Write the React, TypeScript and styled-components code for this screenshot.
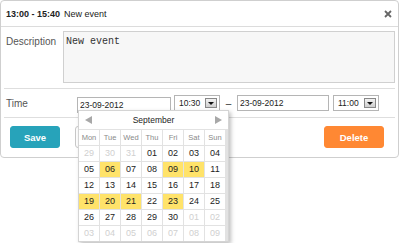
import React from "react";
import styled, { createGlobalStyle } from "styled-components";

const GlobalStyle = createGlobalStyle`
  html, body {
    margin: 0;
    padding: 0;
    background: #fff;
  }
  body {
    font-family: "Liberation Sans", Arial, sans-serif;
    color: #333;
  }
  #root {
    min-height: 243px;
  }
`;

const Dialog = styled.div`
  width: 397px;
  height: 156px;
  border: 1px solid #cfcfcf;
  border-radius: 4px;
  background: #fff;
  box-sizing: content-box;
`;

const Header = styled.div`
  height: 25px;
  display: flex;
  align-items: center;
  padding: 0 6px 0 5px;
  border-bottom: 1px solid #dcdcdc;
  font-size: 9px;
  color: #222;
  .time {
    font-weight: 700;
    margin-right: 4px;
  }
`;

const Close = styled.button`
  margin-left: auto;
  border: none;
  background: none;
  padding: 0;
  width: 8px;
  height: 8px;
  display: flex;
  cursor: pointer;
`;

const Row = styled.div<{ $height: number; $align?: string }>`
  height: ${(p) => p.$height}px;
  display: flex;
  align-items: ${(p) => p.$align || "center"};
  padding-left: 2px;
  margin: 0 3px;
  border-bottom: 1px solid #dedede;
`;

const Label = styled.div<{ $width: number; $top?: number }>`
  width: ${(p) => p.$width}px;
  padding-top: ${(p) => p.$top || 0}px;
  flex: none;
  font-size: 10px;
  color: #555;
`;

const TextArea = styled.textarea`
  width: 333px;
  height: 52px;
  box-sizing: border-box;
  border: 1px solid #d0d0d0;
  background: #f7f7f7;
  font-family: "Liberation Mono", "Courier New", monospace;
  font-size: 10px;
  color: #333;
  padding: 4px 2px;
  margin-top: 4px;
  resize: none;
  outline: none;
`;

const DateField = styled.div`
  position: relative;
`;

const DateInput = styled.input<{ $width: number }>`
  width: ${(p) => p.$width}px;
  height: 16px;
  box-sizing: border-box;
  border: 1px solid #b5b5b5;
  padding: 0 2px;
  font-family: "Liberation Sans", Arial, sans-serif;
  font-size: 8.5px;
  color: #222;
  outline: none;
`;

const TimeSelect = styled.div<{ $ml: number }>`
  margin-left: ${(p) => p.$ml}px;
  width: 46px;
  height: 16px;
  box-sizing: border-box;
  border: 1px solid #b5b5b5;
  display: flex;
  align-items: center;
  padding: 0 2px 0 4px;
  font-size: 8.5px;
  color: #222;
  .drop {
    margin-left: auto;
    width: 12px;
    height: 10px;
    border: 1px solid #888;
    background: linear-gradient(#f2f2f2, #cfcfcf);
    display: flex;
    align-items: center;
    justify-content: center;
    box-sizing: border-box;
  }
  .drop::after {
    content: "";
    border-left: 3px solid transparent;
    border-right: 3px solid transparent;
    border-top: 3px solid #111;
    margin-top: 1px;
  }
`;

const Dash = styled.span`
  width: 17px;
  text-align: center;
  font-size: 10px;
  color: #333;
`;

const Actions = styled.div`
  height: 38px;
  display: flex;
  align-items: center;
  padding: 0 14px 0 9px;
  gap: 15px;
`;

const Button = styled.button<{ $bg: string; $width: number }>`
  width: ${(p) => p.$width}px;
  height: 22px;
  border-radius: 3px;
  border: 1px solid ${(p) => (p.$bg === "#fff" ? "#c8c8c8" : p.$bg)};
  background: ${(p) => p.$bg};
  color: ${(p) => (p.$bg === "#fff" ? "#444" : "#fff")};
  font-family: "Liberation Sans", Arial, sans-serif;
  font-weight: 700;
  font-size: 9.5px;
  padding: 0;
  cursor: pointer;
  &:last-child {
    margin-left: auto;
  }
`;

const Calendar = styled.div`
  position: absolute;
  top: 16px;
  left: 1px;
  width: 149px;
  background: #fff;
  border: 1px solid #d4d4d4;
  box-shadow: 2px 2px 4px rgba(0, 0, 0, 0.25);
  z-index: 2;
`;

const CalHead = styled.div`
  height: 17px;
  display: flex;
  align-items: center;
  justify-content: space-between;
  padding: 1px 6px 0;
  font-size: 8.5px;
  color: #222;
`;

const Arrow = styled.span<{ $dir: "left" | "right" }>`
  width: 0;
  height: 0;
  border-top: 4px solid transparent;
  border-bottom: 4px solid transparent;
  ${(p) =>
    p.$dir === "left"
      ? "border-right: 7px solid #a8a8a8;"
      : "border-left: 7px solid #a8a8a8;"}
`;

const Grid = styled.div`
  display: grid;
  grid-template-columns: repeat(7, 20px);
  grid-auto-rows: 15px;
  gap: 1px;
  background: #e2e2e2;
  border-top: 1px solid #e2e2e2;
`;

const Cell = styled.div<{ $kind: "head" | "day" | "other" | "busy" }>`
  display: flex;
  align-items: center;
  justify-content: center;
  overflow: hidden;
  font-size: ${(p) => (p.$kind === "head" ? "7.5px" : "9px")};
  background: ${(p) => (p.$kind === "busy" ? "#ffe36a" : "#fff")};
  color: ${(p) =>
    p.$kind === "head" ? "#8a8a8a" : p.$kind === "other" ? "#d0d0d0" : "#222"};
`;

const weekdays = ["Mon", "Tue", "Wed", "Thu", "Fri", "Sat", "Sun"];
const busy = [6, 9, 10, 19, 20, 21, 23];

const pad = (n: number) => (n < 10 ? "0" + n : String(n));

const days: { label: string; kind: "day" | "other" | "busy" }[] = [
  ...[29, 30, 31].map((d) => ({ label: pad(d), kind: "other" as const })),
  ...Array.from({ length: 30 }, (_, i) => ({
    label: pad(i + 1),
    kind: busy.includes(i + 1) ? ("busy" as const) : ("day" as const),
  })),
  ...Array.from({ length: 9 }, (_, i) => ({
    label: pad(i + 1),
    kind: "other" as const,
  })),
];

const CloseIcon = () => (
  <svg width="8" height="8" viewBox="0 0 8 8">
    <path d="M1 1L7 7M7 1L1 7" stroke="#666" strokeWidth="1.8" />
  </svg>
);

const App = () => {
  return (
    <>
      <GlobalStyle />
      <Dialog>
        <Header>
          <span className="time">13:00 - 15:40</span>
          <span>New event</span>
          <Close>
            <CloseIcon />
          </Close>
        </Header>
        <Row $height={61} $align="flex-start">
          <Label $width={57} $top={9}>
            Description
          </Label>
          <TextArea defaultValue="New event" />
        </Row>
        <Row $height={28}>
          <Label $width={71}>Time</Label>
          <DateField>
            <DateInput $width={94} defaultValue="23-09-2012" />
            <Calendar>
              <CalHead>
                <Arrow $dir="left" />
                <span>September</span>
                <Arrow $dir="right" />
              </CalHead>
              <Grid>
                {weekdays.map((w) => (
                  <Cell key={w} $kind="head">
                    {w}
                  </Cell>
                ))}
                {days.map((d, i) => (
                  <Cell key={i} $kind={d.kind}>
                    {d.label}
                  </Cell>
                ))}
              </Grid>
            </Calendar>
          </DateField>
          <TimeSelect $ml={3}>
            10:30
            <span className="drop" />
          </TimeSelect>
          <Dash>–</Dash>
          <DateInput $width={92} defaultValue="23-09-2012" />
          <TimeSelect $ml={4}>
            11:00
            <span className="drop" />
          </TimeSelect>
        </Row>
        <Actions>
          <Button $bg="#27a3ba" $width={50}>
            Save
          </Button>
          <Button $bg="#fff" $width={60}>
            Cancel
          </Button>
          <Button $bg="#ff8833" $width={60}>
            Delete
          </Button>
        </Actions>
      </Dialog>
    </>
  );
};

export default App;
